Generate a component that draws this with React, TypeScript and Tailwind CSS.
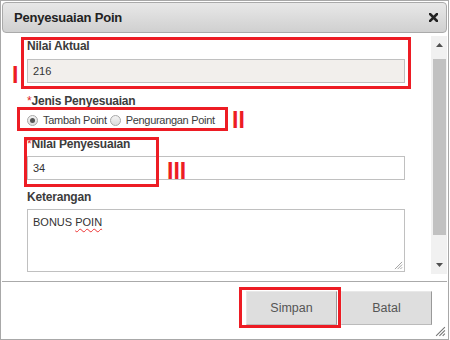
import React from 'react';

const RED = 'border-[#ed1c24]';

function CloseIcon() {
  return (
    <svg width="9" height="9" viewBox="0 0 9 9" className="shrink-0">
      <path d="M1 1 L8 8 M8 1 L1 8" stroke="#222" strokeWidth="2.6" strokeLinecap="square" />
    </svg>
  );
}

function Grip({ size = 10, color = '#8a8a8a' }: { size?: number; color?: string }) {
  return (
    <svg width={size} height={size} viewBox="0 0 10 10">
      <path d="M9 1 L1 9 M9 4 L4 9 M9 7 L7 9" stroke={color} strokeWidth="1" />
    </svg>
  );
}

function Label({ text, required }: { text: string; required?: boolean }) {
  return (
    <div className="h-[14px] leading-[14px] text-[12px] font-bold tracking-[-0.2px] text-[#3c3c3c]">
      {required && <span className="font-normal text-[#e0221c]">*</span>}
      {text}
    </div>
  );
}

function Radio({ checked, label }: { checked?: boolean; label: string }) {
  return (
    <div className="flex items-center">
      <span className="w-[11px] h-[11px] rounded-full border border-[#a8a8a8] bg-gradient-to-b from-[#f4f4f4] to-[#dcdcdc] flex items-center justify-center">
        {checked && <span className="w-[5px] h-[5px] rounded-full bg-[#555]" />}
      </span>
      <span className="ml-[5px] text-[11px] tracking-[-0.3px] text-[#3c3c3c]">{label}</span>
    </div>
  );
}

function Scrollbar() {
  return (
    <div className="mt-[3px] w-[16px] h-[238px] bg-[#f1f1f1] flex flex-col items-center">
      <div className="h-[16px] w-full flex items-center justify-center pt-[1px]">
        <svg width="7" height="4" viewBox="0 0 7 4">
          <path d="M3.5 0 L7 4 L0 4 Z" fill="#505050" />
        </svg>
      </div>
      <div className="mt-[7px] ml-[1px] w-[13px] h-[176px] bg-[#c1c1c1]" />
      <div className="flex-1" />
      <div className="h-[16px] w-full flex items-center justify-center pb-[3px]">
        <svg width="7" height="4" viewBox="0 0 7 4">
          <path d="M0 0 L7 0 L3.5 4 Z" fill="#505050" />
        </svg>
      </div>
    </div>
  );
}

function Marker({ text, className }: { text: string; className: string }) {
  return (
    <span className={`absolute text-[23px] leading-none font-bold text-[#ed1c24] ${className}`}>
      {text}
    </span>
  );
}

export default function App() {
  return (
    <div className="relative w-[449px] h-[340px] border border-[#a8a8a8] p-px bg-white flex flex-col [font-family:'Liberation_Sans',Arial,sans-serif]">
      <div className="h-[31px] shrink-0 rounded-[4px] border border-[#aaaaaa] bg-gradient-to-b from-[#e8e8e8] to-[#d0d0d0] flex items-center justify-between pl-[11px] pr-[8px]">
        <span className="text-[13px] font-bold tracking-[-0.2px] text-[#222]">Penyesuaian Poin</span>
        <CloseIcon />
      </div>

      <div className="h-[248px] shrink-0 flex">
        <div className="flex-1 pl-[25px] pt-[6px]">
          <Label text="Nilai Aktual" />
          <div className="mt-[6px] w-[378px] h-[24px] border border-[#c0c0c0] bg-[#f2efec] px-[5px] flex items-center text-[11px] text-[#333]">
            216
          </div>

          <div className="mt-[11px]">
            <Label text="Jenis Penyesuaian" required />
          </div>
          <div className="mt-[4px] h-[16px] flex items-center gap-[3px]">
            <Radio checked label="Tambah Point" />
            <Radio label="Pengurangan Point" />
          </div>

          <div className="mt-[9px]">
            <Label text="Nilai Penyesuaian" required />
          </div>
          <div className="mt-[5px] w-[378px] h-[24px] border border-[#c0c0c0] bg-white px-[5px] flex items-center text-[11px] text-[#333]">
            34
          </div>

          <div className="mt-[10px]">
            <Label text="Keterangan" />
          </div>
          <div className="mt-[5px] w-[378px] h-[63px] border border-[#c0c0c0] bg-white px-[5px] pt-[6px] flex flex-col text-[11px] leading-[13px] text-[#333]">
            <div>
              BONUS <span className="underline decoration-wavy decoration-[#e33] decoration-1 underline-offset-2">POIN</span>
            </div>
            <div className="flex-1" />
            <div className="self-end -mr-[4px] mb-[1px]">
              <Grip size={9} color="#9a9a9a" />
            </div>
          </div>
        </div>
        <Scrollbar />
      </div>

      <div className="flex-1 border-t border-[#aaaaaa] flex justify-end items-start gap-[4px] pt-[9px] pr-[15px]">
        <button className="w-[91px] h-[34px] bg-[#dedede] border border-[#e8e8e8] border-r-[#999] border-b-[#bbb] text-[12.5px] text-[#555]">
          Simpan
        </button>
        <button className="w-[91px] h-[34px] bg-[#dedede] border border-[#e8e8e8] border-r-[#999] border-b-[#bbb] text-[12.5px] text-[#555]">
          Batal
        </button>
      </div>

      <div className="absolute right-[2px] bottom-[2px]">
        <Grip size={11} color="#777" />
      </div>

      {/* annotations */}
      <div className={`absolute left-[20px] top-[36px] w-[390px] h-[52px] border-[3px] ${RED}`} />
      <Marker text="I" className="left-[11px] top-[63px]" />
      <div className={`absolute left-[16px] top-[106px] w-[211px] h-[24px] border-[3px] ${RED}`} />
      <Marker text="II" className="left-[231px] top-[108px]" />
      <div className={`absolute left-[23px] top-[136px] w-[135px] h-[50px] border-[3px] ${RED}`} />
      <Marker text="III" className="left-[166px] top-[159px]" />
      <div className={`absolute left-[238px] top-[286px] w-[102px] h-[41px] border-[3px] ${RED}`} />
    </div>
  );
}
